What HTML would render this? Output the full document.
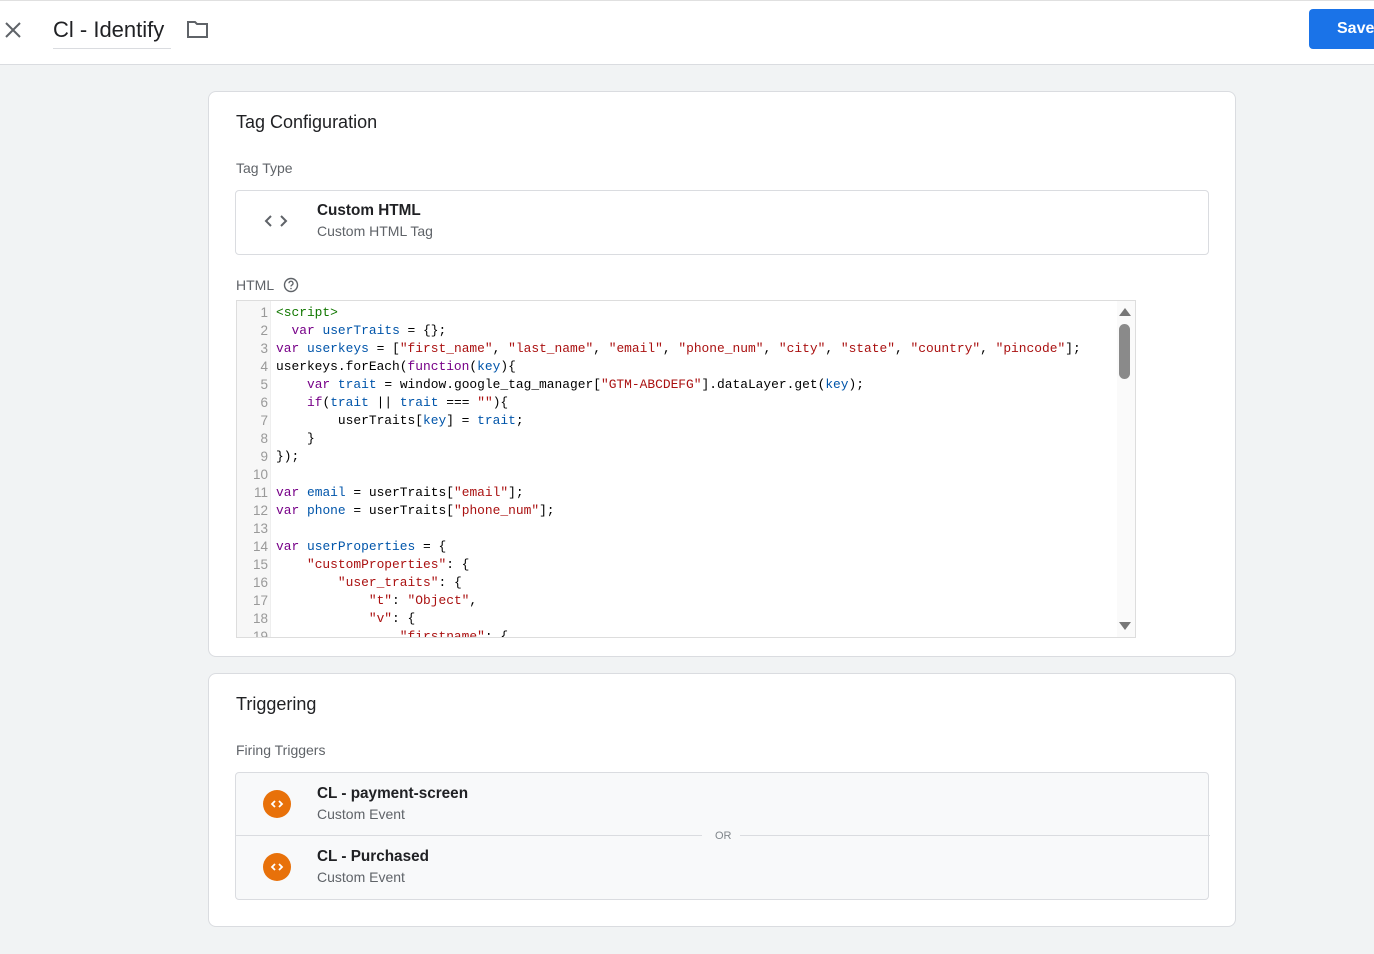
<!DOCTYPE html>
<html><head><meta charset="utf-8"><style>
*{box-sizing:border-box;margin:0;padding:0}
body{width:1374px;height:954px;overflow:hidden;background:#f1f3f4;font-family:"Liberation Sans",Arial,sans-serif;position:relative;color:#202124}
.hdr{position:absolute;left:0;top:0;width:1374px;height:65px;background:#fff;border-top:1px solid #e0e0e0;border-bottom:1px solid #dadce0}
.card{position:absolute;left:208px;width:1028px;background:#fff;border:1px solid #dadce0;border-radius:8px}
.abs{position:absolute}
.code{position:absolute;left:236px;top:300px;width:900px;height:338px;border:1px solid #ddd;background:#fff;overflow:hidden;font-family:"Liberation Mono",monospace;font-size:12.9px}
.gut{position:absolute;left:0;top:0;width:34px;height:100%;background:#f7f7f7;border-right:1px solid #eee}
.ln{position:absolute;left:0;width:31px;text-align:right;color:#999;height:18px;line-height:18px;font-family:"Liberation Sans",sans-serif;font-size:13.5px}
.cl{position:absolute;left:39px;white-space:pre;height:18px;line-height:18px;color:#000}
.k{color:#708}.v{color:#05a}.s{color:#a11}.t{color:#170}.f{color:#708}
.trig{position:absolute;left:235px;top:772px;width:974px;height:128px;background:#f8f9fa;border:1px solid #dadce0;border-radius:4px}
.ic{position:absolute;width:28px;height:28px;border-radius:50%;background:#e8710a}
.nm{position:absolute;font-size:15.3px;font-weight:bold;color:#202124}
.sb{position:absolute;font-size:14px;color:#5f6368}
</style></head><body>
<div class="hdr">
<svg class="abs" style="left:4px;top:20px" width="18" height="18" viewBox="0 0 18 18"><path d="M2 2L16 16M16 2L2 16" stroke="#5f6368" stroke-width="2"/></svg>
<div class="abs" style="left:53px;top:16px;font-size:22px;color:#202124">Cl - Identify</div>
<div class="abs" style="left:53px;top:47px;width:118px;height:1px;background:#dadce0"></div>
<svg class="abs" style="left:186px;top:19px" width="24" height="20" viewBox="0 0 24 20"><path d="M2 2h7l2 2h10v13H2z" fill="none" stroke="#5f6368" stroke-width="2"/></svg>
<div class="abs" style="left:1309px;top:8px;width:80px;height:40px;background:#1a73e8;border-radius:4px;color:#fff;font-size:16px;font-weight:bold;line-height:40px;padding-left:28px">Save</div>
</div>

<div class="card" style="top:91px;height:566px"></div>
<div class="abs" style="left:236px;top:112px;font-size:18px">Tag Configuration</div>
<div class="abs" style="left:236px;top:160px;font-size:14px;color:#5f6368">Tag Type</div>
<div class="abs" style="left:235px;top:190px;width:974px;height:65px;border:1px solid #dadce0;border-radius:4px"></div>
<svg class="abs" style="left:264px;top:213px" width="24" height="16" viewBox="0 0 24 16"><path d="M7 3L2 8L7 13M17 3L22 8L17 13" fill="none" stroke="#5f6368" stroke-width="2"/></svg>
<div class="nm" style="left:317px;top:202px">Custom HTML</div>
<div class="sb" style="left:317px;top:223px">Custom HTML Tag</div>
<div class="abs" style="left:236px;top:277px;font-size:14px;color:#5f6368">HTML</div>
<svg class="abs" style="left:283px;top:277px" width="16" height="16" viewBox="0 0 16 16"><circle cx="8" cy="8" r="6.5" fill="none" stroke="#5f6368" stroke-width="1.4"/><path d="M6 6.3a2 2 0 1 1 2.8 1.8c-.6.3-.8.7-.8 1.4" fill="none" stroke="#5f6368" stroke-width="1.3"/><circle cx="8" cy="11.5" r=".8" fill="#5f6368"/></svg>

<div class="code">
<div class="gut"></div>
<div class="ln" style="top:3px">1</div><div class="cl" style="top:3px"><span class="t">&lt;script&gt;</span></div>
<div class="ln" style="top:21px">2</div><div class="cl" style="top:21px">  <span class="k">var</span> <span class="v">userTraits</span> = {};</div>
<div class="ln" style="top:39px">3</div><div class="cl" style="top:39px"><span class="k">var</span> <span class="v">userkeys</span> = [<span class="s">"first_name"</span>, <span class="s">"last_name"</span>, <span class="s">"email"</span>, <span class="s">"phone_num"</span>, <span class="s">"city"</span>, <span class="s">"state"</span>, <span class="s">"country"</span>, <span class="s">"pincode"</span>];</div>
<div class="ln" style="top:57px">4</div><div class="cl" style="top:57px">userkeys.forEach(<span class="f">function</span>(<span class="v">key</span>){</div>
<div class="ln" style="top:75px">5</div><div class="cl" style="top:75px">    <span class="k">var</span> <span class="v">trait</span> = window.google_tag_manager[<span class="s">"GTM-ABCDEFG"</span>].dataLayer.get(<span class="v">key</span>);</div>
<div class="ln" style="top:93px">6</div><div class="cl" style="top:93px">    <span class="k">if</span>(<span class="v">trait</span> || <span class="v">trait</span> === <span class="s">""</span>){</div>
<div class="ln" style="top:111px">7</div><div class="cl" style="top:111px">        userTraits[<span class="v">key</span>] = <span class="v">trait</span>;</div>
<div class="ln" style="top:129px">8</div><div class="cl" style="top:129px">    }</div>
<div class="ln" style="top:147px">9</div><div class="cl" style="top:147px">});</div>
<div class="ln" style="top:165px">10</div>
<div class="ln" style="top:183px">11</div><div class="cl" style="top:183px"><span class="k">var</span> <span class="v">email</span> = userTraits[<span class="s">"email"</span>];</div>
<div class="ln" style="top:201px">12</div><div class="cl" style="top:201px"><span class="k">var</span> <span class="v">phone</span> = userTraits[<span class="s">"phone_num"</span>];</div>
<div class="ln" style="top:219px">13</div>
<div class="ln" style="top:237px">14</div><div class="cl" style="top:237px"><span class="k">var</span> <span class="v">userProperties</span> = {</div>
<div class="ln" style="top:255px">15</div><div class="cl" style="top:255px">    <span class="s">"customProperties"</span>: {</div>
<div class="ln" style="top:273px">16</div><div class="cl" style="top:273px">        <span class="s">"user_traits"</span>: {</div>
<div class="ln" style="top:291px">17</div><div class="cl" style="top:291px">            <span class="s">"t"</span>: <span class="s">"Object"</span>,</div>
<div class="ln" style="top:309px">18</div><div class="cl" style="top:309px">            <span class="s">"v"</span>: {</div>
<div class="ln" style="top:327px">19</div><div class="cl" style="top:327px">                <span class="s">"firstname"</span>: {</div>
<div class="abs" style="right:0;top:0;width:18px;height:100%;background:#fafafa"></div>
<svg class="abs" style="right:4px;top:6px" width="12" height="9"><path d="M0 9L6 1L12 9z" fill="#777"/></svg>
<div class="abs" style="right:5px;top:23px;width:11px;height:55px;border-radius:6px;background:#8a8a8a"></div>
<svg class="abs" style="right:4px;bottom:6px" width="12" height="9"><path d="M0 0L6 8L12 0z" fill="#777"/></svg>
</div>

<div class="card" style="top:673px;height:254px"></div>
<div class="abs" style="left:236px;top:694px;font-size:18px">Triggering</div>
<div class="abs" style="left:236px;top:742px;font-size:14px;color:#5f6368">Firing Triggers</div>
<div class="trig">
<div class="abs" style="left:0;top:62px;width:466px;height:1px;background:#dadce0"></div>
<div class="abs" style="left:504px;top:62px;width:470px;height:1px;background:#dadce0"></div>
<div class="abs" style="left:479px;top:57px;font-size:11px;color:#80868b">OR</div>
<div class="ic" style="left:27px;top:17px"><svg width="28" height="28" viewBox="0 0 28 28"><path d="M12 11L9 14L12 17M16 11L19 14L16 17" fill="none" stroke="#fff" stroke-width="1.8"/></svg></div>
<div class="nm" style="left:81px;top:12px">CL - payment-screen</div>
<div class="sb" style="left:81px;top:33px">Custom Event</div>
<div class="ic" style="left:27px;top:80px"><svg width="28" height="28" viewBox="0 0 28 28"><path d="M12 11L9 14L12 17M16 11L19 14L16 17" fill="none" stroke="#fff" stroke-width="1.8"/></svg></div>
<div class="nm" style="left:81px;top:75px">CL - Purchased</div>
<div class="sb" style="left:81px;top:96px">Custom Event</div>
</div>
</body></html>
